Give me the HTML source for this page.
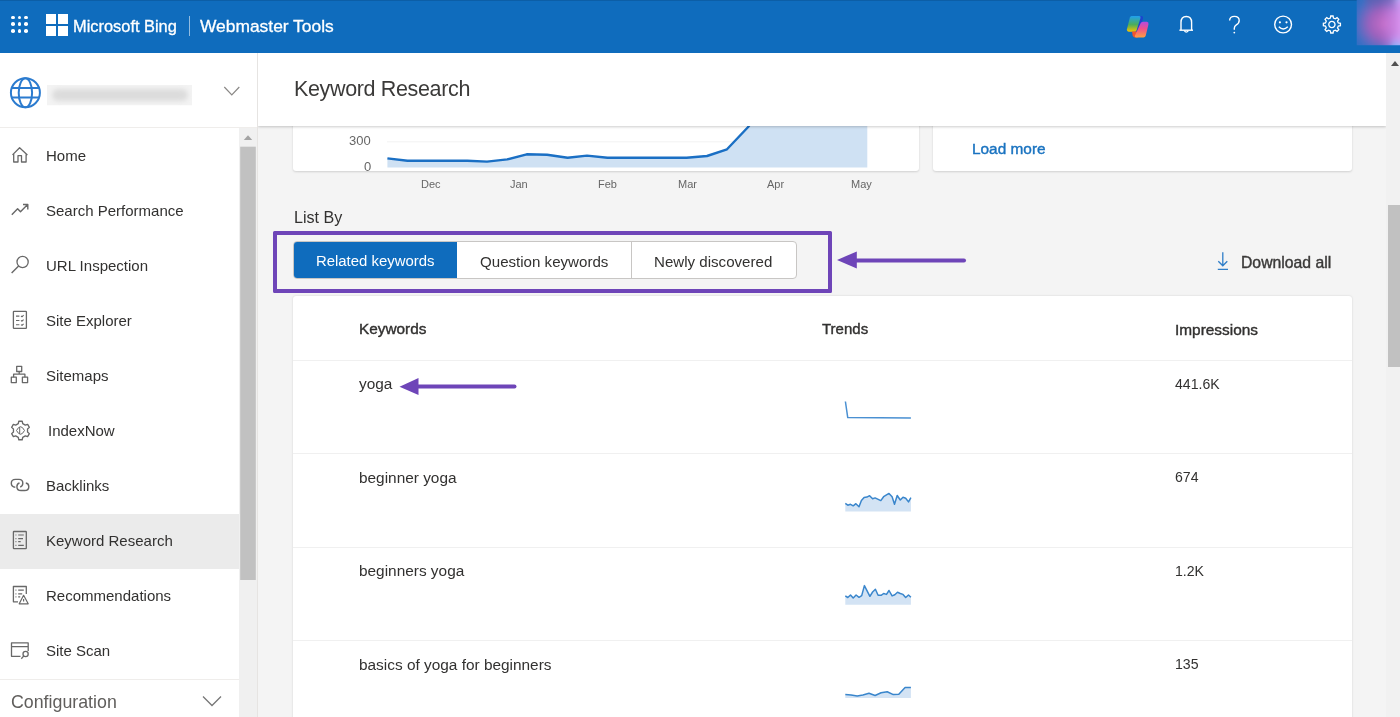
<!DOCTYPE html>
<html><head><meta charset="utf-8">
<style>
*{margin:0;padding:0;box-sizing:border-box}
html,body{width:1400px;height:717px;overflow:hidden;background:#f4f4f4;font-family:"Liberation Sans",sans-serif;position:relative}
.a{position:absolute}
.t{position:absolute;line-height:1;white-space:nowrap;will-change:transform}
#hdr{left:0;top:0;width:1400px;height:53px;background:#0f6cbd;border-top:1px solid #0c5ea6;z-index:10}
.dot{position:absolute;width:3.6px;height:3.6px;border-radius:50%;background:#fff}
.sq{position:absolute;width:10px;height:10px;background:#fff}
#side{left:0;top:53px;width:258px;height:664px;background:#fff;z-index:5;border-right:1px solid #e6e4e2}
.nt{will-change:transform;position:absolute;left:46px;font-size:15px;color:#323130;line-height:1;white-space:nowrap}
#mhdr{left:258px;top:53px;width:1128px;height:73px;background:#fff;z-index:4;box-shadow:0 1px 2.5px rgba(0,0,0,.2)}
.card{position:absolute;background:#fff;border-radius:3px;box-shadow:0 0.6px 2.2px rgba(0,0,0,.15)}
.ct{will-change:transform;position:absolute;line-height:1;white-space:nowrap;color:#666;font-size:11px}
.hd{will-change:transform;position:absolute;line-height:1;white-space:nowrap;color:#323130;font-size:15px;-webkit-text-stroke:0.4px #323130}
.rt{will-change:transform;position:absolute;line-height:1;white-space:nowrap;color:#323130;font-size:15.4px}
.div{position:absolute;left:0;width:1059px;height:1px;background:#f0f0f0}
</style></head><body>

<!-- Header -->
<div id="hdr" class="a">
  <div class="dot" style="left:11px;top:14.6px"></div><div class="dot" style="left:17.7px;top:14.6px"></div><div class="dot" style="left:24.4px;top:14.6px"></div>
  <div class="dot" style="left:11px;top:21.3px"></div><div class="dot" style="left:17.7px;top:21.3px"></div><div class="dot" style="left:24.4px;top:21.3px"></div>
  <div class="dot" style="left:11px;top:28px"></div><div class="dot" style="left:17.7px;top:28px"></div><div class="dot" style="left:24.4px;top:28px"></div>
  <div class="sq" style="left:46px;top:13.2px"></div><div class="sq" style="left:57.7px;top:13.2px"></div>
  <div class="sq" style="left:46px;top:24.9px"></div><div class="sq" style="left:57.7px;top:24.9px"></div>
  <div class="t" style="left:73.4px;top:16.7px;font-size:16.4px;color:#fff;-webkit-text-stroke:0.3px #fff">Microsoft Bing</div>
  <div class="a" style="left:189px;top:15px;width:1px;height:19.5px;background:rgba(255,255,255,.55)"></div>
  <div class="t" style="left:200.4px;top:16.7px;font-size:17.4px;color:#fff;-webkit-text-stroke:0.3px #fff">Webmaster Tools</div>
  <svg class="a" style="left:1100px;top:-1px" width="300" height="53" viewBox="1100 0 300 53">
    <defs>
      <linearGradient id="cpl" x1="0" y1="0" x2="0" y2="1"><stop offset="0" stop-color="#1fa0f0"/><stop offset=".55" stop-color="#4cae5a"/><stop offset="1" stop-color="#f5c400"/></linearGradient>
      <linearGradient id="cpr" x1="0" y1="0" x2="0" y2="1"><stop offset="0" stop-color="#b34be0"/><stop offset=".45" stop-color="#f0508a"/><stop offset="1" stop-color="#ffa040"/></linearGradient>
      <radialGradient id="av" cx="0.62" cy="0.52" r="0.75"><stop offset="0" stop-color="#c46cc6"/><stop offset=".35" stop-color="#9d62bd"/><stop offset=".7" stop-color="#3f6fc4"/><stop offset="1" stop-color="#1f6cc0"/></radialGradient>
      <linearGradient id="avr" x1="0" y1="0" x2="1" y2="0"><stop offset="0" stop-color="#e090ff" stop-opacity="0"/><stop offset="1" stop-color="#f4a8ff" stop-opacity=".9"/></linearGradient><linearGradient id="avv" x1="0" y1="0" x2="0" y2="1"><stop offset="0" stop-color="#9ab8f0" stop-opacity=".85"/><stop offset=".25" stop-color="#f0a0ff" stop-opacity="0"/><stop offset=".7" stop-color="#f0a0ff" stop-opacity="0"/><stop offset="1" stop-color="#60c8ff" stop-opacity=".9"/></linearGradient><linearGradient id="avt" x1="0" y1="0" x2="0" y2="1"><stop offset="0" stop-color="#6a58a8" stop-opacity=".7"/><stop offset=".3" stop-color="#6a58a8" stop-opacity="0"/></linearGradient>
      <filter id="bl"><feGaussianBlur stdDeviation="1.2"/></filter>
    </defs>
    <path d="M1138.3,16 L1141.5,16 Q1143.6,16.3 1143,18.6 L1138.8,31.7 L1134.3,31.7 Z" fill="#1d45cf"/>
    <path d="M1131.6,16 L1139.2,16 Q1140.9,16.2 1140.5,18 L1136.6,30.2 Q1136,31.7 1134.4,31.7 L1128.6,31.7 Q1126.6,31.6 1126.9,29.6 L1129.9,17.6 Q1130.3,16 1131.6,16 Z" fill="url(#cpl)"/>
    <path d="M1132,31.4 L1136.8,31.4 L1137.8,37.5 L1134.6,37.5 Q1133,37.3 1132.6,35.2 Z" fill="#f0552d"/>
    <path d="M1142.9,21.8 L1146.9,21.8 Q1148.9,21.9 1148.5,24.2 L1145.7,35.8 Q1145.2,37.5 1143.5,37.5 L1136.1,37.5 Q1134.4,37.4 1134.9,35.8 L1140.6,23.3 Q1141.2,21.8 1142.9,21.8 Z" fill="url(#cpr)"/>
    <!-- bell -->
    <path d="M1181,30 L1181,22.5 Q1181,16.5 1186.3,16.5 Q1191.6,16.5 1191.6,22.5 L1191.6,30" fill="none" stroke="#fff" stroke-width="1.4"/>
    <path d="M1179.4,30.2 L1193,30.2" stroke="#fff" stroke-width="1.4"/>
    <path d="M1184.3,30.6 Q1186.3,33.6 1188.3,30.6" fill="none" stroke="#fff" stroke-width="1.3"/>
    <!-- question -->
    <path d="M1229.6,20.5 Q1229.8,16.4 1234.4,16.4 Q1239.2,16.4 1239.2,20.6 Q1239.2,23.2 1236.3,24.9 Q1234.3,26.1 1234.3,28.2 L1234.3,29.8" fill="none" stroke="#fff" stroke-width="1.4"/>
    <circle cx="1234.3" cy="32.6" r="0.9" fill="#fff"/>
    <!-- smiley -->
    <circle cx="1283.1" cy="24.5" r="8.4" fill="none" stroke="#fff" stroke-width="1.4"/>
    <circle cx="1279.9" cy="22.3" r="1.1" fill="#fff"/><circle cx="1286.5" cy="22.3" r="1.1" fill="#fff"/>
    <path d="M1278.8,26.8 Q1283.2,31 1287.8,26.8" fill="none" stroke="#fff" stroke-width="1.4"/>
    <!-- gear -->
    <g transform="translate(1331.9,24.5)" fill="none" stroke="#fff" stroke-width="1.3">
      <path id="gearp" d="M-1.54,-6.42 L-1.18,-8.52 L1.18,-8.52 L1.54,-6.42 L3.45,-5.63 L5.19,-6.86 L6.86,-5.19 L5.63,-3.45 L6.42,-1.54 L8.52,-1.18 L8.52,1.18 L6.42,1.54 L5.63,3.45 L6.86,5.19 L5.19,6.86 L3.45,5.63 L1.54,6.42 L1.18,8.52 L-1.18,8.52 L-1.54,6.42 L-3.45,5.63 L-5.19,6.86 L-6.86,5.19 L-5.63,3.45 L-6.42,1.54 L-8.52,1.18 L-8.52,-1.18 L-6.42,-1.54 L-5.63,-3.45 L-6.86,-5.19 L-5.19,-6.86 L-3.45,-5.63 Z"/>
      <circle r="3.1"/>
    </g>
    <!-- avatar -->
    <clipPath id="avc"><rect x="1356.7" y="0" width="43.3" height="45.2"/></clipPath>
    <filter id="avb" x="-20%" y="-20%" width="140%" height="140%"><feGaussianBlur stdDeviation="2.5"/></filter>
    <g clip-path="url(#avc)"><g filter="url(#avb)">
    <rect x="1350" y="-5" width="55" height="55" fill="url(#av)"/>
    <rect x="1380" y="-5" width="25" height="55" fill="url(#avr)"/><rect x="1392" y="-5" width="10" height="55" fill="url(#avv)"/><rect x="1366" y="-5" width="30" height="55" fill="url(#avt)"/>
    </g></g>
  </svg>
</div>

<!-- Sidebar -->
<div id="side" class="a">
  <svg class="a" style="left:0;top:0" width="257" height="664" viewBox="0 53 257 664">
    <defs><filter id="nb" x="-20%" y="-100%" width="140%" height="300%"><feGaussianBlur stdDeviation="2.5"/></filter></defs>
    <!-- globe -->
    <g fill="none" stroke="#2b7bcf" stroke-width="2">
      <circle cx="25.4" cy="92.8" r="14.5"/>
      <ellipse cx="25.4" cy="92.8" rx="6.7" ry="14.5"/>
      <path d="M11.8,87.9 H39 M11.8,97.6 H39"/>
    </g>
    <!-- blurred name -->
    <clipPath id="nc"><rect x="47" y="85" width="145" height="20.6"/></clipPath>
    <g clip-path="url(#nc)">
    <rect x="47" y="85" width="145" height="20.6" fill="#f3f3f3"/>
    <rect x="52" y="89" width="136" height="12" rx="6" fill="#dcdcdc" filter="url(#nb)"/>
    </g>
    <!-- chevron -->
    <path d="M224.3,87 L231.8,94.8 L239.3,87" fill="none" stroke="#8a8886" stroke-width="1.2"/>
    <rect x="0" y="127" width="257" height="1" fill="#efedeb"/>
    <!-- highlight -->
    <rect x="0" y="514" width="239" height="55" fill="#ebebeb"/>
    <!-- scrollbar -->
    <rect x="239" y="128" width="18" height="589" fill="#f0f0f0"/>
    <path d="M243.8,140 L248,135.2 L252.2,140 Z" fill="#a3a3a3"/>
    <rect x="240.2" y="146.7" width="15.6" height="433.3" fill="#c1c1c1"/>
    <!-- divider config -->
    <rect x="0" y="679" width="239" height="1" fill="#efedeb"/>
    <path d="M203,696.5 L212,705.5 L221,696.5" fill="none" stroke="#777" stroke-width="1.3"/>
    <!-- nav icons -->
    <g fill="none" stroke="#686868" stroke-width="1.3" stroke-linejoin="round">
      <!-- home -->
      <path d="M12.5,154.9 L19.6,147.7 L27.4,154.9 M13.7,153.7 V162 H18 V155.7 H21.5 V162 H26.1 V153.7"/>
      <!-- search perf -->
      <path d="M11.8,214.8 L17.6,208.8 L20.5,211.8 L27.6,204.6 M23,204.5 H27.8 V209.4" stroke-width="1.4"/>
      <!-- url inspection -->
      <circle cx="22.6" cy="262" r="5.6"/><path d="M18.6,266 L11.6,273" stroke-width="1.4"/>
      <!-- site explorer -->
      <rect x="13.4" y="311.3" width="13" height="17.1" rx="0.6"/>
      <path d="M16,316.1 H19.4 M16,320.5 H19.4 M16,324.7 H19.4 M21,316 L22,316.8 L23.6,315.2 M21,320.4 L22,321.2 L23.6,319.6 M21,324.6 L22,325.4 L23.6,323.8" stroke-width="1.1"/>
      <!-- sitemaps -->
      <rect x="16.7" y="366.3" width="5" height="5.2"/>
      <path d="M19.2,371.5 V374.2 M13.6,377.2 V374.2 H24.9 V377.2"/>
      <rect x="11.3" y="377.2" width="5" height="5.4"/><rect x="22.4" y="377.2" width="5.2" height="5.4"/>
      <!-- indexnow gear -->
      <g transform="translate(20.5,430.5)"><path id="gear2" d="M-2.22,-6.85 L-1.71,-9.24 L1.71,-9.24 L2.22,-6.85 L4.82,-5.35 L7.15,-6.10 L8.86,-3.14 L7.04,-1.50 L7.04,1.50 L8.86,3.14 L7.15,6.10 L4.82,5.35 L2.22,6.85 L1.71,9.24 L-1.71,9.24 L-2.22,6.85 L-4.82,5.35 L-7.15,6.10 L-8.86,3.14 L-7.04,1.50 L-7.04,-1.50 L-8.86,-3.14 L-7.15,-6.10 L-4.82,-5.35 Z"/>
        <path d="M-4,0 Q-2,-3.8 0,-3.8 Q2,-3.8 4,0 Q2,3.8 0,3.8 Q-2,3.8 -4,0 Z M-0.8,-3.5 V3.5" stroke-width="1"/></g>
      <!-- backlinks -->
      <path d="M15.3,487.2 Q11.3,487 11.3,483.3 Q11.3,479.4 15.5,479.4 H19 Q22.8,479.4 22.8,483.3 Q22.8,486.2 20.2,487" stroke-width="1.4"/>
      <path d="M19.5,483 Q16.9,483.6 16.9,486.7 Q16.9,490.5 21,490.5 H24.6 Q28.8,490.5 28.8,486.7 Q28.8,483.4 25.8,483" stroke-width="1.4"/>
      <!-- keyword research -->
      <rect x="13.4" y="531.5" width="12.9" height="17.1" rx="0.6"/>
      <path d="M18.2,535 H23.8 M18.2,538.6 H23 M18.2,541.7 H20.7 M18.2,545.3 H23.8 M15.5,535 H16.4 M15.5,538.6 H16.4 M15.5,541.7 H16.4 M15.5,545.3 H16.4" stroke-width="1.2"/>
      <!-- recommendations -->
      <path d="M18,601.8 H13.4 V586.5 H26.3 V594"/>
      <path d="M18.2,590.2 H23.8 M18.2,593.8 H22.2 M18.2,596.9 H20.2 M15.5,590.2 H16.4 M15.5,593.8 H16.4 M15.5,596.9 H16.4" stroke-width="1.2"/>
      <path d="M23.6,595.3 L28.2,603.8 H19.2 Z M23.6,599 V601.5" stroke-width="1.2"/>
      <!-- site scan -->
      <path d="M20.5,656.3 H11.5 V642.9 H28.2 V651 M11.5,646.6 H28.2"/>
      <circle cx="25.6" cy="654" r="2.6"/><path d="M23.8,655.9 L21.3,658.7"/>
    </g>
  </svg>
  <div class="nt" style="top:94.9px">Home</div>
  <div class="nt" style="top:149.9px">Search Performance</div>
  <div class="nt" style="top:204.9px">URL Inspection</div>
  <div class="nt" style="top:259.9px">Site Explorer</div>
  <div class="nt" style="top:314.9px">Sitemaps</div>
  <div class="nt" style="top:369.9px;left:48px">IndexNow</div>
  <div class="nt" style="top:424.9px">Backlinks</div>
  <div class="nt" style="top:479.9px">Keyword Research</div>
  <div class="nt" style="top:534.9px">Recommendations</div>
  <div class="nt" style="top:589.9px">Site Scan</div>
  <div class="nt" style="top:640.7px;left:11px;font-size:17.8px;color:#605e5c">Configuration</div>
</div>

<!-- Main header -->
<div id="mhdr" class="a">
  <div class="t" style="left:35.6px;top:25.8px;font-size:21.5px;color:#3b3a39;letter-spacing:-0.35px">Keyword Research</div>
</div>
<!-- main scrollbar -->
<div class="a" style="left:1386px;top:53px;width:14px;height:664px;background:#f1f1f1;z-index:6">
  <svg class="a" style="left:0;top:0" width="14" height="20"><path d="M5,13 L9,8 L13,13 Z" fill="#505050"/></svg>
  <div class="a" style="left:1.5px;top:151.5px;width:12.5px;height:162.5px;background:#c1c1c1"></div>
</div>

<!-- Chart card -->
<div class="card" style="left:293px;top:60px;width:626px;height:110.7px">
  <svg class="a" style="left:0;top:0" width="627" height="111" viewBox="293 60 627 111">
    <rect x="387" y="141.3" width="480" height="1" fill="#f2f2f2"/>
    <polygon fill="#cfe1f3" points="387.4,167.6 387.4,158.4 407.5,160.8 427.5,160.7 447.5,160.7 467.3,160.7 487,161.6 507.2,159.4 526.7,154.3 547.1,154.7 567.6,157.7 587,155.6 607.5,157.7 627.5,157.7 648.6,157.8 667,157.8 686.6,157.8 707,156 727,149.3 747.9,127.2 768,100 787,60 867.3,60 867.3,167.6"/>
    <polyline fill="none" stroke="#1a6fc4" stroke-width="2.4" stroke-linejoin="round" points="387.4,158.4 407.5,160.8 427.5,160.7 447.5,160.7 467.3,160.7 487,161.6 507.2,159.4 526.7,154.3 547.1,154.7 567.6,157.7 587,155.6 607.5,157.7 627.5,157.7 648.6,157.8 667,157.8 686.6,157.8 707,156 727,149.3 747.9,127.2 768,100 787,60"/>
  </svg>
  <div class="ct" style="left:56px;top:74.2px;font-size:13px">300</div>
  <div class="ct" style="left:70.5px;top:100.3px;font-size:13px">0</div>
</div>
<div class="ct" style="left:420.5px;top:178.7px">Dec</div>
<div class="ct" style="left:510px;top:178.7px">Jan</div>
<div class="ct" style="left:598.2px;top:178.7px">Feb</div>
<div class="ct" style="left:677.9px;top:178.7px">Mar</div>
<div class="ct" style="left:767px;top:178.7px">Apr</div>
<div class="ct" style="left:851.4px;top:178.7px">May</div>

<!-- Load more card -->
<div class="card" style="left:932.6px;top:60px;width:419px;height:110.7px">
  <div class="t" style="left:39px;top:81px;font-size:15.4px;color:#1a73c0;-webkit-text-stroke:0.4px #1a73c0">Load more</div>
</div>

<!-- List By -->
<div class="t" style="left:293.6px;top:209.1px;font-size:16.1px;color:#323130">List By</div>
<!-- purple rect -->
<div class="a" style="left:273px;top:231px;width:559.3px;height:61.7px;border:4px solid #6e45b8;border-radius:1.5px"></div>
<!-- tabs -->
<div class="a" style="left:293px;top:241px;width:504px;height:38px;border:1px solid #c8c6c4;border-radius:4px;background:#fff;overflow:hidden">
  <div class="a" style="left:-1px;top:-1px;width:164.3px;height:38px;background:#0f6cbd;border-radius:4px 0 0 4px"></div>
  <div class="a" style="left:336.6px;top:0;width:1px;height:36px;background:#c8c6c4"></div>
</div>
<div class="t" style="left:316px;top:253.8px;font-size:14.9px;color:#fff">Related keywords</div>
<div class="t" style="left:480px;top:253.8px;font-size:15.1px;color:#323130">Question keywords</div>
<div class="t" style="left:654.3px;top:253.8px;font-size:15.1px;color:#323130">Newly discovered</div>
<!-- arrow 1 -->
<svg class="a" style="left:830px;top:245px" width="145" height="30" viewBox="830 245 145 30">
  <path d="M837,260 L856.8,251.4 L856.8,268.4 Z" fill="#6e45b8"/>
  <path d="M855,260.5 H964" stroke="#6e45b8" stroke-width="4" stroke-linecap="round"/>
</svg>
<!-- download all -->
<svg class="a" style="left:1214px;top:250px" width="18" height="22" viewBox="1214 250 18 22">
  <path d="M1222.8,252.3 V265.5 M1218.3,261.3 L1222.8,265.8 L1227.3,261.3 M1217.8,269.3 H1228" fill="none" stroke="#2f7ec8" stroke-width="1.3"/>
</svg>
<div class="t" style="left:1241px;top:255.2px;font-size:15.75px;color:#3b3a39;-webkit-text-stroke:0.4px #3b3a39">Download all</div>

<!-- table card -->
<div class="card" style="left:293px;top:296px;width:1059px;height:440px">
  <div class="hd" style="left:65.8px;top:25.1px;font-size:15.35px">Keywords</div>
  <div class="hd" style="left:529px;top:25.3px">Trends</div>
  <div class="hd" style="left:881.8px;top:25.6px;font-size:15.4px">Impressions</div>
  <div class="div" style="top:64px"></div>
  <div class="div" style="top:157.4px"></div>
  <div class="div" style="top:250.8px"></div>
  <div class="div" style="top:344.2px"></div>
  <div class="rt" style="left:66.3px;top:80.3px">yoga</div>
  <div class="rt" style="left:66.3px;top:173.7px">beginner yoga</div>
  <div class="rt" style="left:66.3px;top:267.1px">beginners yoga</div>
  <div class="rt" style="left:66.3px;top:360.5px">basics of yoga for beginners</div>
  <div class="rt" style="left:882px;top:81px;font-size:14.1px">441.6K</div>
  <div class="rt" style="left:882px;top:174.4px;font-size:14.1px">674</div>
  <div class="rt" style="left:882px;top:267.8px;font-size:14.1px">1.2K</div>
  <div class="rt" style="left:882px;top:361.2px;font-size:14.1px">135</div>
  <svg class="a" style="left:0;top:0" width="1059" height="440" viewBox="293 296 1059 440">
    <g fill="#d3e3f4" stroke="none">
      <polygon points="845.3,511.6 845.3,503.4 847.8,505.2 850.5,504.3 853.2,505.8 855.9,503.7 859.0,506.7 861.4,500.6 864.1,497.6 866.9,497.1 869.6,495.7 872.6,498.8 875.1,497.9 880.8,500.6 883.6,496.7 889.0,493.4 892.1,496.7 894.5,504.3 897.2,495.5 900.3,500.0 903.0,497.3 905.7,498.2 908.5,501.9 910.9,497.6 910.9,511.6"/>
      <polygon points="845.3,604.7 845.3,595.9 847.8,597.5 850.5,595.0 853.2,598.0 856.1,595.0 859.0,597.3 861.7,595.6 864.4,585.6 869.9,596.3 872.6,592.0 875.4,589.3 878.1,595.3 881.1,595.3 883.6,593.5 886.5,594.4 889.0,590.5 892.1,595.9 894.8,594.7 897.5,592.3 900.3,593.5 903.0,594.4 905.7,597.5 908.5,595.0 910.9,597.2 910.9,604.7"/>
      <polygon points="845.3,697.9 845.3,694.6 851.1,695.0 857.2,696.1 862.9,695.0 869.0,693.2 875.1,695.5 881.1,692.8 887.2,691.7 893.3,694.6 898.8,694.3 905.1,687.6 910.9,687.6 910.9,697.9"/>
    </g>
    <g fill="none" stroke="#3a86cc" stroke-width="1.5" stroke-linejoin="round">
      <polyline points="845.4,401.5 847.75,417.6 910.9,417.9" stroke="#4a90d2"/>
      <polyline points="845.3,503.4 847.8,505.2 850.5,504.3 853.2,505.8 855.9,503.7 859.0,506.7 861.4,500.6 864.1,497.6 866.9,497.1 869.6,495.7 872.6,498.8 875.1,497.9 880.8,500.6 883.6,496.7 889.0,493.4 892.1,496.7 894.5,504.3 897.2,495.5 900.3,500.0 903.0,497.3 905.7,498.2 908.5,501.9 910.9,497.6"/>
      <polyline points="845.3,595.9 847.8,597.5 850.5,595.0 853.2,598.0 856.1,595.0 859.0,597.3 861.7,595.6 864.4,585.6 869.9,596.3 872.6,592.0 875.4,589.3 878.1,595.3 881.1,595.3 883.6,593.5 886.5,594.4 889.0,590.5 892.1,595.9 894.8,594.7 897.5,592.3 900.3,593.5 903.0,594.4 905.7,597.5 908.5,595.0 910.9,597.2"/>
      <polyline points="845.3,694.6 851.1,695.0 857.2,696.1 862.9,695.0 869.0,693.2 875.1,695.5 881.1,692.8 887.2,691.7 893.3,694.6 898.8,694.3 905.1,687.6 910.9,687.6"/>
    </g>
    <!-- arrow 2 -->
    <path d="M399.5,386.8 L418.5,378 L418.5,395 Z" fill="#6e45b8"/>
    <path d="M417,386.5 H514.5" stroke="#6e45b8" stroke-width="4" stroke-linecap="round"/>
  </svg>
</div>

</body></html>
